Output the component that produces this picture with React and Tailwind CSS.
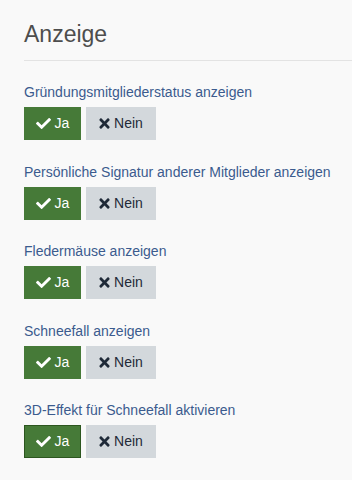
import React, { useState } from "react";
import { FaCheck, FaTimes } from "react-icons/fa";

const settings = [
  "Gründungsmitgliederstatus anzeigen",
  "Persönliche Signatur anderer Mitglieder anzeigen",
  "Fledermäuse anzeigen",
  "Schneefall anzeigen",
  "3D-Effekt für Schneefall aktivieren",
];

const Toggle = ({ label, focused }) => {
  const [value, setValue] = useState(true);

  return (
    <div className="pt-[10px] pb-[11.5px]">
      <div className="text-[14px] leading-[20px] text-[#3b5b8e]">{label}</div>
      <div className="mt-[5px] flex gap-[5px]">
        <button
          onClick={() => setValue(true)}
          className={
            "flex h-[33px] w-[57px] items-center justify-center gap-[4px] border text-[14px] text-white " +
            (focused ? "border-[#2c561f] bg-[#467a38]" : "border-[#467a38] bg-[#467a38]")
          }
        >
          <FaCheck className="h-[15px] w-[15px]" />
          <span>Ja</span>
        </button>
        <button
          onClick={() => setValue(false)}
          className="flex h-[33px] w-[70px] items-center justify-center gap-[4px] bg-[#d3d8dc] text-[14px] text-[#1f2a38]"
        >
          <FaTimes className="h-[15px] w-[11px]" />
          <span>Nein</span>
        </button>
      </div>
    </div>
  );
};

export default function App() {
  return (
    <div className="min-h-[480px] w-[352px] bg-[#f9f9f9] pl-6 font-['Liberation_Sans',Arial,sans-serif]">
      <div className="border-b border-[#e3e3e3] pt-[22px] pb-[13px]">
        <h2 className="text-[23px] leading-[25px] text-[#4d4d4d]">Anzeige</h2>
      </div>
      <div className="pt-[11px]">
        {settings.map((label, i) => (
          <Toggle key={i} label={label} focused={i === settings.length - 1} />
        ))}
      </div>
    </div>
  );
}
